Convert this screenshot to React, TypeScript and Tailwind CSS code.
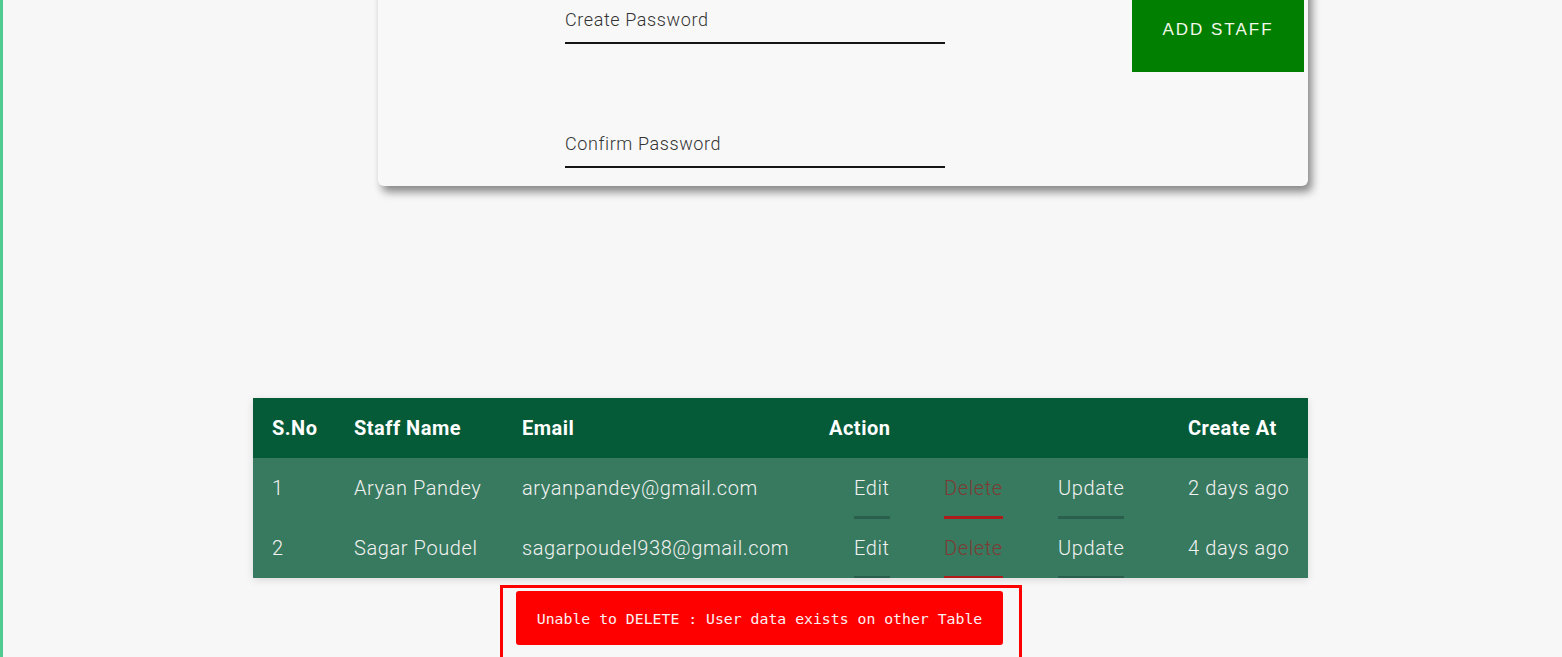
import React from "react";

const rows = [
  { n: "1", name: "Aryan Pandey", email: "aryanpandey@gmail.com", at: "2 days ago" },
  { n: "2", name: "Sagar Poudel", email: "sagarpoudel938@gmail.com", at: "4 days ago" },
];

const cols = "grid-cols-[82px_168px_307px_25px_90px_114px_130px_139px]";

function Field({ label }: { label: string }) {
  return (
    <div className="pt-[2px] pb-[10px] border-b-2 border-[#151515]">
      <div className="h-[24px] leading-[24px] text-[18px] font-light text-[#333] tracking-[0.6px]">{label}</div>
    </div>
  );
}

function ActionLink({ text, red }: { text: string; red?: boolean }) {
  return (
    <span className="relative inline-flex h-full items-center">
      <span className={red ? "text-[#7e3a34]" : "text-[#f2f2f2]"}>{text}</span>
      <span
        className={
          "absolute left-0 right-0 bottom-[-1px] h-[3px] " + (red ? "bg-[#b01c1c]" : "bg-[#2b5f4d]")
        }
      />
    </span>
  );
}

export default function App() {
  return (
    <div
      className="min-h-[657px] h-[657px] overflow-hidden bg-[#f7f7f7] border-l-[3px] border-[#4fca90]"
      style={{ fontFamily: "Roboto, 'Noto Sans', sans-serif" }}
    >
      <div className="pl-[375px] mt-[-24px]">
        <div className="w-[930px] h-[210px] bg-[#f8f8f8] rounded-[6px] shadow-[4px_6px_8px_rgba(0,0,0,0.45)] flex items-start pl-[187px] pr-[4px]">
          <div className="w-[380px] pt-[30px] flex flex-col gap-[86px]">
            <Field label="Create Password" />
            <Field label="Confirm Password" />
          </div>
          <div className="flex-1" />
          <button
            className="mt-[11px] w-[172px] h-[85px] bg-[#007f00] text-[#f4f8ea] text-[17px] tracking-[2px] font-medium"
            style={{ fontFamily: "'Liberation Sans', Arial, sans-serif" }}
          >
            ADD STAFF
          </button>
        </div>
      </div>

      <div className="mt-[212px] pl-[250px]">
        <div className="w-[1055px] overflow-hidden shadow-[0_2px_8px_rgba(0,0,0,0.12)]">
          <div className={"grid " + cols + " h-[60px] bg-[#055a38] text-white font-bold text-[20px] tracking-[0.5px] items-center"}>
            <div className="pl-[19px]">S.No</div>
            <div className="pl-[19px]">Staff Name</div>
            <div className="pl-[19px]">Email</div>
            <div className="col-span-4 pl-[19px]">Action</div>
            <div className="pl-[19px]">Create At</div>
          </div>
          {rows.map((r) => (
            <div
              key={r.n}
              className={"grid " + cols + " h-[60px] bg-[#387a5f] text-[#f2f2f2] font-light text-[20px] tracking-[0.6px] items-stretch"}
            >
              <div className="pl-[19px] flex items-center">{r.n}</div>
              <div className="pl-[19px] flex items-center">{r.name}</div>
              <div className="pl-[19px] flex items-center">{r.email}</div>
              <div />
              <div className="pl-[19px] h-[60px]"><ActionLink text="Edit" /></div>
              <div className="pl-[19px] h-[60px]"><ActionLink text="Delete" red /></div>
              <div className="pl-[19px] h-[60px]"><ActionLink text="Update" /></div>
              <div className="pl-[19px] flex items-center">{r.at}</div>
            </div>
          ))}
        </div>
      </div>

      <div className="mt-[7px] pl-[497px]">
        <div className="w-[522px] h-[80px] border-[3px] border-[#ff0000] pt-[3px] pl-[13px]">
          <div
            className="w-[487px] h-[54px] rounded-[3px] bg-[#ff0000] text-[#fdf0f0] text-[14.8px] flex items-center justify-center pt-[2px]"
            style={{ fontFamily: "'DejaVu Sans Mono', 'Liberation Mono', monospace" }}
          >
            Unable to DELETE : User data exists on other Table
          </div>
        </div>
      </div>
    </div>
  );
}
